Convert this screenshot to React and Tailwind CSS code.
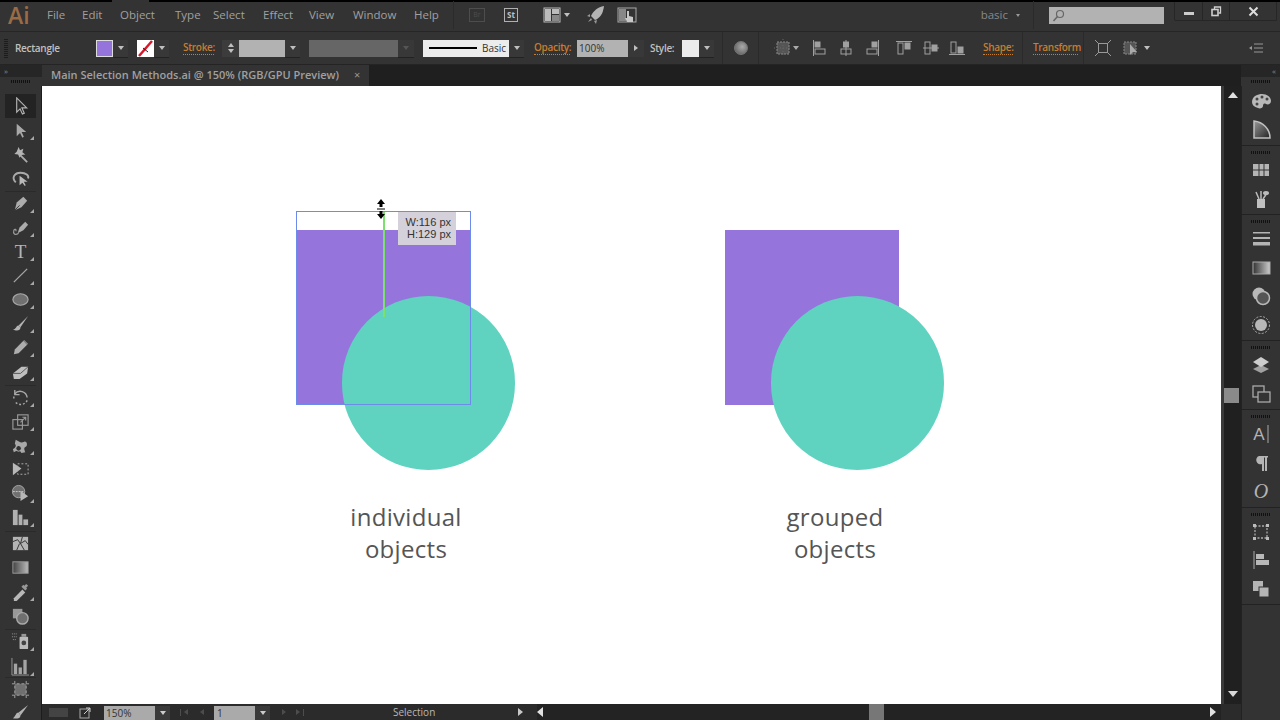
import React from 'react'

const font = { fontFamily: '"Open Sans", "Liberation Sans", sans-serif' }

const menuItems = [
  { label: 'File', w: 'w-[35px]' },
  { label: 'Edit', w: 'w-[38px]' },
  { label: 'Object', w: 'w-[55px]' },
  { label: 'Type', w: 'w-[38px]' },
  { label: 'Select', w: 'w-[50px]' },
  { label: 'Effect', w: 'w-[46px]' },
  { label: 'View', w: 'w-[44px]' },
  { label: 'Window', w: 'w-[61px]' },
  { label: 'Help', w: 'w-[39px]' },
]

const Svg = ({ children, size = 20, box = 20, className = '' }) => (
  <svg width={size} height={size} viewBox={`0 0 ${box} ${box}`} className={className}>
    {children}
  </svg>
)

// small triangle in the corner of a tool button
const Corner = () => (
  <span className="absolute right-[2px] bottom-[2px] w-0 h-0 border-l-[4px] border-l-transparent border-b-[4px] border-b-[#a8a8a8]" />
)

const tools = [
  { active: true, icon: <path d="M6 1v15l3.500-3.500 2.500 5.500 2-1-2.500-5.500h5z" fill="#2a2a2a" stroke="#b4b4b4" strokeWidth="1.200" /> },
  { corner: true, icon: <path d="M6 3v13l3.500-3.500 2.500 5 1.500-.8-2.300-5h4.800z" fill="#a8a8a8" /> },
  { icon: <g><path d="M10 11l7 7" stroke="#aaa" strokeWidth="2" /><path d="M8 2l1.500 3.500L13 4l-1 3.500L15 10l-4 .5-2 3-1.500-3.500-4-.5L6 7z" fill="#b4b4b4" /></g> },
  { icon: <g><path d="M5 14C0 9 4 4 10 4s9 3 8 6" fill="none" stroke="#aaa" strokeWidth="2" /><path d="M9 7v10l3-2.500 2.500 3.500 1-1-2-3.500h4z" fill="#b8b8b8" /></g> },
  { corner: true, sep: 'border-t border-[#2a2a2a] mt-[1px]', icon: <g><path d="M4 17l2-8 7-6 4 4-6 7z" fill="#acacac" /><path d="M4 17l5-5" stroke="#333" /></g> },
  { corner: true, icon: <g><path d="M7 16l2-6 6-6 3 3-5 6z" fill="#acacac" /><path d="M8 16c-4 3-6 0-5-3 1-2 3-1 2 1" fill="none" stroke="#999" strokeWidth="1.300" /></g> },
  { corner: true, icon: <text x="10" y="17" textAnchor="middle" fontSize="20" fontFamily="Liberation Serif" fill="#b4b4b4">T</text> },
  { corner: true, icon: <path d="M3 17L17 3" stroke="#a5a5a5" strokeWidth="1.400" /> },
  { corner: true, icon: <ellipse cx="10" cy="10" rx="8" ry="6" fill="#707070" stroke="#aaa" strokeWidth="1.200" /> },
  { corner: true, icon: <g><path d="M18 2L8 12l2 2z" fill="#b4b4b4" /><path d="M8 12c-3 0-2 4-6 4 3 2 8 2 8-2z" fill="#b4b4b4" /></g> },
  { corner: true, icon: <g><path d="M3 17l1-5 9-9 4 4-9 9z" fill="#adadad" /><path d="M13 3l4 4 1-1-4-4z" fill="#888" /></g> },
  { corner: true, icon: <g><path d="M2 12l9-7h7l-1 7-8 6H3z" fill="#bfbfbf" /><path d="M2 12h8l8-7" fill="none" stroke="#555" /></g> },
  { corner: true, sep: 'border-t border-[#2a2a2a] mt-[2px]', icon: <g fill="none" stroke="#a8a8a8" strokeWidth="1.500"><path d="M4 6a7.500 7.500 0 0 1 13 4" /><path d="M17 13a7.500 7.500 0 0 1-13 1" strokeDasharray="2 2" /><path d="M3 11V9" /><path d="M4 2v5h5" /></g> },
  { corner: true, icon: <g fill="none" stroke="#999" strokeWidth="1.200"><rect x="2" y="8" width="10" height="10" /><rect x="7" y="3" width="11" height="11" /><path d="M10 11l5-5M12 5.500h3.500V9" /></g> },
  { corner: true, icon: <g><path d="M5 4c4 2 5 4 9 2 2-1 4 3 2 5-3 1-2 3-1 6l-4 1c-2-4-4-3-8-1l-1-3c3-2 4-3 2-6z" fill="#a8a8a8" /><circle cx="8" cy="13" r="3" fill="#333" stroke="#bbb" /></g> },
  { icon: <g><path d="M2 3l9 6-9 7z" fill="#b8b8b8" /><rect x="7" y="4" width="11" height="11" fill="none" stroke="#b0b0b0" strokeDasharray="2 2" /></g> },
  { corner: true, icon: <g><circle cx="8" cy="8" r="6.500" fill="#707070" stroke="#a8a8a8" /><path d="M2 8h12" stroke="#ccc" strokeDasharray="2 1" /><path d="M10 7v11l8-5z" fill="#b8b8b8" /></g> },
  { corner: true, icon: <g fill="#b0b0b0"><rect x="2" y="2" width="5" height="16" /><rect x="8" y="7" width="4" height="11" /><rect x="13" y="12" width="5" height="6" /></g> },
  { sep: 'border-t border-[#2a2a2a] mt-[2px]', icon: <g><rect x="2" y="3" width="16" height="14" fill="#b4b4b4" /><path d="M2 8l5-2 3 4 5-3 3 4M6 17l3-7M12 3l-2 7 4 7" fill="none" stroke="#333" /></g> },
  { icon: <g><defs><linearGradient id="tg" x1="0" x2="1"><stop offset="0" stopColor="#444" /><stop offset="1" stopColor="#bbb" /></linearGradient></defs><rect x="2" y="4" width="16" height="12" fill="url(#tg)" stroke="#999" /></g> },
  { corner: true, icon: <g><path d="M3 17l9-9 3 3-9 9-3 0z" fill="#b8b8b8" /><path d="M11 5l2-2 1 1 2-2 2 2-2 2 1 1-2 2z" fill="#999" /></g> },
  { icon: <g><rect x="2" y="3" width="10" height="10" fill="#999" /><circle cx="12" cy="13" r="6" fill="#707070" stroke="#aaa" strokeWidth="1.500" /></g> },
  { corner: true, sep: 'border-t border-[#2a2a2a] mt-[2px]', icon: <g><path d="M1 2h6M1 5h5M2 8h4" stroke="#999" strokeDasharray="1 1" /><rect x="9" y="5" width="9" height="13" rx="1" fill="#bbb" /><circle cx="13.500" cy="11.500" r="2.500" fill="#444" /><rect x="11" y="2" width="5" height="3" fill="#999" /></g> },
  { corner: true, mt: 'mt-[1px]', icon: <g fill="#a4a4a4"><rect x="3" y="7" width="3.500" height="11" /><rect x="8" y="11" width="3.500" height="7" /><rect x="13" y="3" width="3.500" height="15" /><path d="M1 1v18h18" fill="none" stroke="#999" /></g> },
  { sep: 'border-t border-[#2a2a2a] -mt-[1px]', icon: <g><rect x="4" y="4" width="12" height="12" fill="#707070" /><path d="M1 4h18M1 16h18M4 1v18M16 1v18" stroke="#a5a5a5" strokeDasharray="3 2" /></g> },
  { icon: <g><path d="M18 1L8 9l2 3z" fill="#b4b4b4" /><path d="M8 9c-3 0-3 4-6 6 4 1 8 0 8-3z" fill="#b4b4b4" /></g> },
]

const dockGroups = [
  {
    first: true,
    icons: [
      <g key="a"><path d="M1 11C1 5 7 3 11 3c5 0 9 3 9 7 0 3-3 4-5 3-2-1-3 0-3 2s-3 3-5 2c-4-1-6-3-6-6z" fill="#b8b8b8" /><g fill="#444"><circle cx="6" cy="8" r="1.500" /><circle cx="11" cy="6" r="1.500" /><circle cx="16" cy="8" r="1.500" /><circle cx="6" cy="13" r="1.500" /></g></g>,
      <g key="b"><defs><linearGradient id="gb" x1="0" y1="0" x2="1" y2="1"><stop offset="0" stopColor="#999" /><stop offset="1" stopColor="#222" /></linearGradient></defs><path d="M3 1v17h16C19 9 12 2 3 1z" fill="url(#gb)" stroke="#c0c0c0" strokeWidth="1.500" /></g>,
    ],
  },
  {
    icons: [
      <g key="c" fill="#b4b4b4"><rect x="2" y="4" width="16" height="12" /><path d="M8 4v12M13 4v12M2 10h16" stroke="#333" /></g>,
      <g key="d"><rect x="6" y="10" width="8" height="9" fill="#c0c0c0" /><path d="M8 10L5 3M10 10V2M12 10l4-6" stroke="#bbb" strokeWidth="1.500" /><ellipse cx="15" cy="4" rx="3" ry="2" fill="#bbb" /></g>,
    ],
  },
  {
    icons: [
      <g key="e" fill="#b4b4b4"><rect x="2" y="3" width="17" height="1.500" /><rect x="2" y="8" width="17" height="2" /><rect x="2" y="13" width="17" height="3.500" /></g>,
      <g key="f"><defs><linearGradient id="gf" x1="0" x2="1"><stop offset="0" stopColor="#333" /><stop offset="1" stopColor="#ccc" /></linearGradient></defs><rect x="2" y="4" width="17" height="12" fill="url(#gf)" stroke="#aaa" /></g>,
      <g key="g"><circle cx="8" cy="8" r="6.500" fill="#b8b8b8" /><circle cx="12" cy="12" r="6.500" fill="#555" stroke="#b8b8b8" strokeWidth="1.500" /></g>,
      <g key="h"><circle cx="10" cy="10" r="8.500" fill="none" stroke="#aaa" strokeDasharray="2 1.500" /><circle cx="10" cy="10" r="6" fill="#b8b8b8" /></g>,
    ],
  },
  {
    icons: [
      <g key="i"><path d="M10 10L2 14l8 4 8-4z" fill="#a0a0a0" /><path d="M10 2L2 7l8 5 8-5z" fill="#cccccc" /></g>,
      <g key="j" fill="none" stroke="#aaa" strokeWidth="1.300"><rect x="2" y="2" width="11" height="11" /><rect x="7" y="8" width="12" height="10" fill="#333" /></g>,
    ],
  },
  {
    icons: [
      <g key="k"><text x="8" y="16" textAnchor="middle" fontSize="17" fontFamily="Liberation Sans" fill="#b4b4b4">A</text><path d="M17 1v18" stroke="#aaa" /></g>,
      <g key="l" fill="#b4b4b4"><path d="M8 3h9v1.500h-1V18h-2V4.500h-1V18h-2v-7a4 4 0 0 1-3-8z" /></g>,
      <text key="m" x="10" y="17" textAnchor="middle" fontSize="20" fontStyle="italic" fontFamily="Liberation Serif" fill="#b4b4b4">O</text>,
    ],
  },
  {
    icons: [
      <g key="n"><rect x="4" y="4" width="12" height="12" fill="none" stroke="#aaa" strokeWidth="1.300" strokeDasharray="2 1.500" /><g fill="#bbb"><rect x="2" y="2" width="3" height="3" /><rect x="15" y="2" width="3" height="3" /><rect x="2" y="15" width="3" height="3" /><rect x="15" y="15" width="3" height="3" /></g></g>,
      <g key="o"><path d="M3 1v18" stroke="#aaa" /><rect x="5" y="4" width="8" height="5" fill="#b8b8b8" /><rect x="5" y="10" width="13" height="5" fill="#b8b8b8" /></g>,
      <g key="p"><rect x="2" y="2" width="10" height="10" fill="#b4b4b4" /><rect x="8" y="8" width="10" height="10" fill="#b4b4b4" stroke="#333" /></g>,
    ],
  },
]

const DropBtn = ({ w = 'w-[15px]', dim = false }) => (
  <div className={`${w} h-[17px] bg-[#383838] flex items-center justify-center shadow-[0_1px_0_#222]`}>
    <span className={`w-0 h-0 border-x-[3px] border-x-transparent border-t-[4px] ${dim ? 'border-t-[#555]' : 'border-t-[#c0c0c0]'}`} />
  </div>
)

const Grip = ({ className = '' }) => (
  <div className={`w-[20px] h-[3px] bg-[repeating-linear-gradient(90deg,#111_0,#111_1px,transparent_1px,transparent_2px)] ${className}`} />
)

const AlignIcon = ({ d, rects }) => (
  <Svg size={18} box={18}>
    <path d={d} stroke="#a0a0a0" fill="none" />
    {rects.map((r, i) => (
      <rect key={i} x={r[0]} y={r[1]} width={r[2]} height={r[3]} fill={r[4] ? '#a0a0a0' : 'none'} stroke="#a0a0a0" />
    ))}
  </Svg>
)

const alignIcons = [
  { ml: 'ml-[11px]', d: 'M3.500 1v16', rects: [[5, 3, 5, 5, 1], [5, 10, 10, 5, 0]] },
  { ml: 'ml-[9px]', d: 'M9 1v16', rects: [[6.5, 3, 5, 5, 1], [4, 10, 10, 5, 0]] },
  { ml: 'ml-[9px]', d: 'M14.500 1v16', rects: [[8, 3, 5, 5, 1], [3, 10, 10, 5, 0]] },
  { ml: 'ml-[13px]', d: 'M1 2.500h16', rects: [[3, 4, 5, 11, 0], [10, 4, 5, 6, 1]] },
  { ml: 'ml-[9px]', d: 'M1 9h16', rects: [[3, 3, 5, 12, 0], [10, 6, 5, 6, 1]] },
  { ml: 'ml-[8px]', d: 'M1 15.500h16', rects: [[3, 3, 5, 11, 0], [10, 8, 5, 6, 1]] },
]

const orangeLabel = 'font-semibold text-[10px] tracking-[-0.3px] whitespace-nowrap text-[#c87d2f] border-b border-dotted border-[#c87d2f] leading-[13px]'

const MenuBar = () => (
  <div className="h-[30px] shrink-0 flex items-center pb-[3px] bg-[#333333] border-b border-[#262626]">
    <span className="w-[47px] pl-[8px] text-[23px] font-semibold text-[#9a6b45] leading-none">Ai</span>
    {menuItems.map((m) => (
      <span key={m.label} className={`${m.w} text-[11.500px] text-[#a0a0a0]`}>{m.label}</span>
    ))}
    <div className="w-px h-[28px] bg-[#2b2b2b]" />
    <div className="ml-[15px] w-[16px] h-[14px] border border-[#4d4d4d] text-[7px] text-[#4d4d4d] leading-[12px] text-center">Br</div>
    <div className="ml-[19px] w-[14px] h-[14px] border border-[#b0b0b0] text-[8px] font-bold text-[#c0c0c0] leading-[12px] text-center">St</div>
    <div className="ml-[25px] flex items-center gap-[2px]">
      <Svg size={19} box={19}>
        <rect x="1" y="2" width="16" height="14" fill="none" stroke="#bbb" />
        <rect x="2" y="3" width="6" height="12" fill="#bbb" />
        <rect x="9" y="3" width="7" height="5" fill="#bbb" />
        <rect x="9" y="9" width="7" height="6" fill="#888" />
      </Svg>
      <span className="w-0 h-0 border-x-[3px] border-x-transparent border-t-[4px] border-t-[#c0c0c0]" />
    </div>
    <div className="ml-[16px]">
      <Svg size={20} box={20}>
        <path d="M18 1C12 2 7 6 5 11l4 4c5-2 8-6 9-14z" fill="#b4b4b4" />
        <path d="M4 9l-3 2 3 1zM8 16l2 3 1-4zM5 13l-3 4 4-2z" fill="#999" />
      </Svg>
    </div>
    <div className="ml-[11px]">
      <Svg size={20} box={20}>
        <rect x="1" y="3" width="18" height="14" fill="none" stroke="#aaa" />
        <rect x="2" y="4" width="7" height="12" fill="#888" />
        <path d="M10 6h2v5l4 1v5h-6l-2-4 2 0z" fill="#c8c8c8" />
      </Svg>
    </div>
    <div className="ml-auto flex items-center self-stretch">
      <span className="text-[11.500px] text-[#888]">basic</span>
      <span className="ml-[8px] w-0 h-0 border-x-[2px] border-x-transparent border-t-[3px] border-t-[#999]" />
      <div className="w-px h-[28px] bg-[#2b2b2b] ml-[13px]" />
      <div className="ml-[15px] w-[115px] h-[17px] bg-[#b2b2b2] flex items-center pl-[3px]">
        <Svg size={13} box={13}>
          <circle cx="8" cy="5" r="3.500" fill="none" stroke="#666" strokeWidth="1.200" />
          <path d="M5.500 7.500L1.500 12" stroke="#666" strokeWidth="1.500" />
        </Svg>
      </div>
      <div className="ml-[10px] w-[103px] h-[19px] self-start mr-[3px] flex border border-t-0 border-[#262626] rounded-b-[2px]">
        <div className="w-[27px] flex items-center justify-center"><span className="w-[10px] h-[3px] bg-[#cccccc] mt-[4px]" /></div>
        <div className="w-[27px] border-l border-[#262626] flex items-center justify-center">
          <Svg size={11} box={11}>
            <path d="M3.500 3V1h6v6H7.500" fill="none" stroke="#d0d0d0" strokeWidth="1.300" />
            <rect x="1" y="3.500" width="6" height="6" fill="none" stroke="#d0d0d0" strokeWidth="1.600" />
          </Svg>
        </div>
        <div className="flex-1 border-l border-[#262626] flex items-center justify-center">
          <Svg size={11} box={11}>
            <path d="M1.500 1.500l8 8M9.500 1.500l-8 8" stroke="#dddddd" strokeWidth="2" />
          </Svg>
        </div>
      </div>
    </div>
  </div>
)

const ControlBar = () => (
  <div className="h-[33px] shrink-0 flex items-center bg-[#333333] border-b border-[#242424] text-[10px]">
    <div className="w-[4px] h-[20px] ml-[4px] bg-[repeating-linear-gradient(0deg,#1c1c1c_0,#1c1c1c_1px,transparent_1px,transparent_2px)]" />
    <span className="ml-[7px] w-[44px] font-semibold tracking-[-0.3px] whitespace-nowrap text-[#c0c0c0]">Rectangle</span>
    <div className="ml-[37px] w-[17px] h-[17px] bg-[#9575dc] border border-[#ddd]" />
    <DropBtn />
    <div className="ml-[9px] w-[17px] h-[17px] bg-white overflow-hidden flex items-center justify-center">
      <Svg size={17} box={17}>
        <path d="M2 16L15 1" stroke="#d8182a" strokeWidth="2.500" />
        <path d="M6 8l5 4" stroke="#222" strokeWidth="1" />
      </Svg>
    </div>
    <DropBtn />
    <span className={`ml-[14px] w-[31px] ${orangeLabel}`}>Stroke:</span>
    <div className="ml-[8px] w-[17px] h-[17px] bg-[#3c3c3c] flex flex-col items-center justify-center gap-[2px]">
      <span className="w-0 h-0 border-x-[3px] border-x-transparent border-b-[4px] border-b-[#c0c0c0]" />
      <span className="w-0 h-0 border-x-[3px] border-x-transparent border-t-[4px] border-t-[#c0c0c0]" />
    </div>
    <div className="w-[46px] h-[17px] bg-[#b2b2b2]" />
    <DropBtn />
    <div className="ml-[9px] w-[89px] h-[17px] bg-[#666666]" />
    <DropBtn w="w-[16px]" dim />
    <div className="ml-[9px] w-[86px] h-[17px] bg-[#ececec] flex items-center pl-[6px] text-[#333]">
      <span className="w-[48px] h-[2px] bg-black" />
      <span className="ml-[5px]">Basic</span>
    </div>
    <DropBtn />
    <span className={`ml-[10px] w-[36px] ${orangeLabel}`}>Opacity:</span>
    <div className="ml-[7px] w-[51px] h-[17px] bg-[#b2b2b2] text-[#333] pl-[2px] leading-[17px]">100%</div>
    <div className="w-[16px] h-[17px] bg-[#383838] flex items-center justify-center">
      <span className="w-0 h-0 border-y-[3px] border-y-transparent border-l-[4px] border-l-[#c0c0c0]" />
    </div>
    <span className="ml-[6px] w-[26px] font-semibold tracking-[-0.3px] text-[#c0c0c0]">Style:</span>
    <div className="ml-[6px] w-[17px] h-[17px] bg-[#ececec]" />
    <DropBtn />
    <div className="ml-[8px] w-px h-[32px] bg-[#2a2a2a]" />
    <div className="ml-[11px] w-[14px] h-[14px] rounded-full bg-[radial-gradient(circle_at_60%_40%,#aaa,#555)] border border-[#777]" />
    <div className="ml-[10px] w-px h-[32px] bg-[#2a2a2a]" />
    <div className="ml-[15px] flex items-center gap-[1px]">
      <Svg size={18} box={18}>
        <rect x="3" y="3" width="12" height="12" fill="#555" stroke="#8a8a8a" strokeDasharray="2 1" />
        <path d="M9 0v18M0 9h18" stroke="#666" strokeDasharray="1 2" />
      </Svg>
      <span className="w-0 h-0 border-x-[3px] border-x-transparent border-t-[4px] border-t-[#aaa]" />
    </div>
    {alignIcons.map((a, i) => (
      <div key={i} className={a.ml}><AlignIcon d={a.d} rects={a.rects} /></div>
    ))}
    <span className={`ml-[17px] w-[30px] ${orangeLabel}`}>Shape:</span>
    <div className="ml-[9px] w-px h-[32px] bg-[#2a2a2a]" />
    <span className={`ml-[10px] w-[45px] ${orangeLabel}`}>Transform</span>
    <div className="ml-[5px] w-px h-[32px] bg-[#2a2a2a]" />
    <div className="ml-[10px]">
      <Svg size={18} box={18}>
        <rect x="4.500" y="4.500" width="9" height="9" fill="none" stroke="#999" />
        <path d="M1 1l3 3M17 1l-3 3M1 17l3-3M17 17l-3-3" stroke="#999" />
      </Svg>
    </div>
    <div className="ml-[10px] flex items-center gap-[4px]">
      <Svg size={18} box={18}>
        <rect x="2" y="3" width="12" height="12" fill="#555" stroke="#888" strokeDasharray="2 1" />
        <path d="M8 5v11l3-3 4 0z" fill="#aaa" />
      </Svg>
      <span className="w-0 h-0 border-x-[3px] border-x-transparent border-t-[4px] border-t-[#c0c0c0]" />
    </div>
    <div className="ml-auto mr-[16px]">
      <Svg size={16} box={16}>
        <path d="M6 4h9M6 8h9M6 12h9" stroke="#999" />
        <path d="M1 8l3-2v4z" fill="#999" />
      </Svg>
    </div>
  </div>
)

const TabBar = () => (
  <div className="h-[21px] shrink-0 flex bg-[#1f1f1f]">
    <div className="w-[42px] flex flex-col bg-[#262626]">
      <div className="h-[12px] text-[8px] text-[#888] pl-[4px] leading-[12px]">»</div>
      <div className="flex-1 bg-[#333333] flex items-center justify-center"><Grip /></div>
    </div>
    <div className="w-[327px] bg-[#333333] flex items-center pl-[9px] text-[11px] font-semibold text-[#a0a0a0] whitespace-nowrap">
      Main Selection Methods.ai @ 150% (RGB/GPU Preview)
      <span className="ml-[15px] font-normal text-[#999]">×</span>
    </div>
    <div className="ml-auto w-[39px] flex flex-col bg-[#262626]">
      <div className="h-[12px] text-[8px] text-[#888] text-right pr-[4px] leading-[12px]">«</div>
      <div className="flex-1 bg-[#333333] flex items-center justify-center"><Grip /></div>
    </div>
  </div>
)

const Canvas = () => (
  <div className="flex-1 relative bg-white overflow-hidden min-w-0">
    {/* free canvas, offsets are relative to its origin at 42,86 */}
    <div className="absolute left-[254px] top-[144px] w-[175px] h-[175px] bg-[#9575dc]" />
    <div className="absolute left-[300px] top-[210px] w-[173px] h-[174px] rounded-full bg-[#5fd3c0]" />
    <div className="absolute left-[254px] top-[125px] w-[175px] h-[194px] border border-[#6d8be8]" />
    <div className="absolute left-[341px] top-[126px] w-[2px] h-[105px] bg-[#7be06e]" />
    <svg width="10" height="20" viewBox="0 0 10 20" className="absolute left-[334px] top-[113px]">
      <path d="M5 0l4 5H6.500v3h-3V5H1zM5 20l-4-5h2.500v-3h3v3H9z" fill="#000" />
      <path d="M1 10h8" stroke="#000" />
    </svg>
    <div
      className="absolute left-[356px] top-[126px] w-[58px] h-[33px] bg-[#d5d1da] text-[11px] leading-[12px] text-[#333] text-right pr-[5px] pt-[4px]"
      style={{ fontFamily: '"Liberation Sans", sans-serif' }}
    >
      W:116 px<br />H:129 px
    </div>
    <div className="absolute left-[298px] top-[415px] w-[132px] text-center text-[24px] tracking-[0.3px] leading-[32px] text-[#555]">
      individual<br />objects
    </div>

    <div className="absolute left-[683px] top-[144px] w-[174px] h-[175px] bg-[#9575dc]" />
    <div className="absolute left-[729px] top-[210px] w-[173px] h-[174px] rounded-full bg-[#5fd3c0]" />
    <div className="absolute left-[727px] top-[415px] w-[132px] text-center text-[24px] tracking-[0.3px] leading-[32px] text-[#555]">
      grouped<br />objects
    </div>
  </div>
)

const Toolbox = () => (
  <div className="w-[42px] shrink-0 bg-[#333333] border-r border-[#1c1c1c] flex flex-col items-center pt-[8px] overflow-hidden">
    {tools.map((t, i) => (
      <div
        key={i}
        className={`relative shrink-0 w-[31px] h-[24px] flex items-center justify-center ${t.active ? 'bg-[#232323]' : ''} ${t.sep || ''} ${t.mt || ''}`}
      >
        <Svg size={19}>{t.icon}</Svg>
        {t.corner && <Corner />}
      </div>
    ))}
  </div>
)

const Scrollbar = () => (
  <div className="w-[20px] shrink-0 bg-[#202020] border-l-[3px] border-[#3a3a3a] flex flex-col items-center relative">
    <span className="mt-[6px] w-0 h-0 border-x-[5px] border-x-transparent border-b-[6px] border-b-[#e0e0e0]" />
    <div className="absolute left-[0px] top-[302px] w-[15px] h-[15px] bg-[#8a8a8a]" />
    <span className="absolute bottom-[7px] w-0 h-0 border-x-[5px] border-x-transparent border-t-[6px] border-t-[#d8d8d8]" />
  </div>
)

const Dock = () => (
  <div className="w-[39px] shrink-0 bg-[#333333] border-l border-[#222] flex flex-col">
    {dockGroups.map((g, i) => (
      <div key={i} className={`flex flex-col items-center border-b border-[#222] pb-[1px] ${g.first ? 'pt-[1px]' : 'pt-[5px]'}`}>
        {!g.first && <Grip className="mb-[2px]" />}
        {g.icons.map((icon, k) => (
          <div key={k} className="h-[28.500px] w-full flex items-center justify-center">
            <Svg size={20}>{icon}</Svg>
          </div>
        ))}
      </div>
    ))}
  </div>
)

const StatusBar = () => (
  <div className="h-[16px] shrink-0 flex items-center bg-[#2b2b2b] text-[10px] text-[#a8a8a8] overflow-hidden">
    <div className="ml-[7px] w-[19px] h-[9px] bg-[#444]" />
    <Svg size={13} box={13} className="ml-[11px]">
      <rect x="1" y="3" width="9" height="9" fill="none" stroke="#aaa" />
      <path d="M5 8l6-6M7 2h4v4" stroke="#ccc" fill="none" />
    </Svg>
    <div className="ml-[12px] w-[51px] h-[14px] self-end bg-[#aaaaaa] text-[#333] pl-[2px] leading-[15px]">150%</div>
    <div className="w-[15px] h-[14px] self-end bg-[#3a3a3a] flex items-center justify-center">
      <span className="w-0 h-0 border-x-[3px] border-x-transparent border-t-[4px] border-t-[#ccc]" />
    </div>
    <div className="ml-[10px] w-[24px] flex items-center justify-between">
      <span className="w-[8px] h-[7px] border-l border-[#4d4d4d] flex items-center justify-end">
        <span className="w-0 h-0 border-y-[3px] border-y-transparent border-r-[4px] border-r-[#4d4d4d]" />
      </span>
      <span className="w-0 h-0 border-y-[3px] border-y-transparent border-r-[4px] border-r-[#4d4d4d]" />
    </div>
    <div className="ml-[10px] w-[41px] h-[14px] self-end bg-[#aaaaaa] text-[#333] pl-[3px] leading-[15px]">1</div>
    <div className="w-[15px] h-[14px] self-end bg-[#3a3a3a] flex items-center justify-center">
      <span className="w-0 h-0 border-x-[3px] border-x-transparent border-t-[4px] border-t-[#ccc]" />
    </div>
    <div className="ml-[12px] w-[22px] flex items-center justify-between">
      <span className="w-0 h-0 border-y-[3px] border-y-transparent border-l-[4px] border-l-[#4d4d4d]" />
      <span className="w-[8px] h-[7px] border-r border-[#4d4d4d] flex items-center">
        <span className="w-0 h-0 border-y-[3px] border-y-transparent border-l-[4px] border-l-[#4d4d4d]" />
      </span>
    </div>
    <span className="ml-[89px] w-[41px] text-[#b8b8b8] whitespace-nowrap">Selection</span>
    <span className="ml-[84px] w-0 h-0 border-y-[4px] border-y-transparent border-l-[5px] border-l-[#c8c8c8]" />
    <div className="ml-[14px] flex-1 h-full bg-[#232323] flex items-center">
      <span className="w-0 h-0 border-y-[5px] border-y-transparent border-r-[6px] border-r-[#e0e0e0]" />
      <div className="ml-[326px] w-[15px] h-[16px] bg-[#777]" />
      <span className="ml-[326px] w-0 h-0 border-y-[5px] border-y-transparent border-l-[6px] border-l-[#e0e0e0]" />
    </div>
    <div className="w-[20px] h-full bg-[#2b2b2b]" />
  </div>
)

export default function App() {
  return (
    <div className="w-[1280px] h-[720px] flex flex-col bg-[#333333] overflow-hidden" style={font}>
      <div className="h-[2px] shrink-0 flex bg-black">
        <div className="ml-[112px] w-[37px] bg-[#333333]" />
      </div>
      <MenuBar />
      <ControlBar />
      <TabBar />
      <div className="flex flex-1 min-h-0">
        <Toolbox />
        <div className="flex-1 flex flex-col min-w-0">
          <div className="flex flex-1 min-h-0">
            <Canvas />
            <Scrollbar />
          </div>
          <StatusBar />
        </div>
        <Dock />
      </div>
    </div>
  )
}
